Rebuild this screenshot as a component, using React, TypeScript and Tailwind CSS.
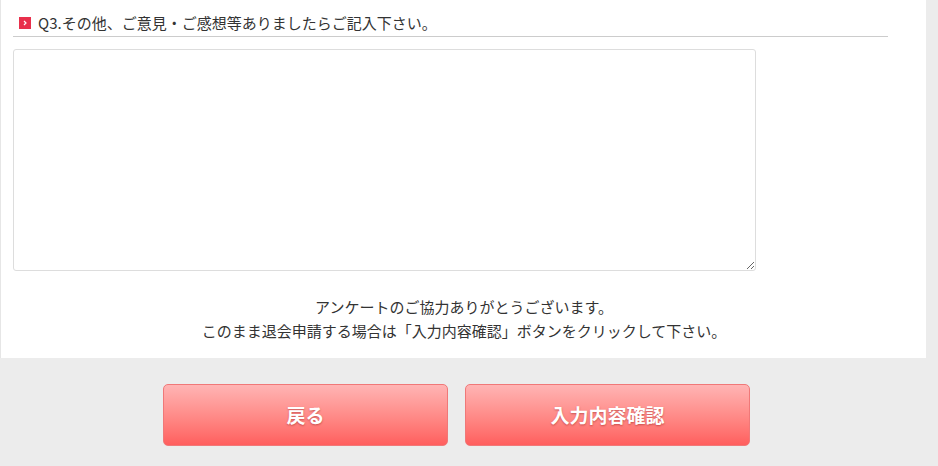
export default function App() {
  const jp = { fontFamily: '"Noto Sans CJK JP", "Liberation Sans", sans-serif' };
  return (
    <div className="w-[938px] h-[466px] bg-[#ececec] overflow-hidden" style={jp}>
      {/* panel */}
      <div className="w-[926px] h-[358px] bg-white border-l border-[#e6e6e6] pt-[13px] pl-[12px]">
        <div className="w-[875px] flex items-center border-b border-[#cccccc] pb-[3px] pl-[6px]">
          <span className="w-[12px] h-[12px] bg-[#e8304c] flex items-center justify-center mr-[7px]">
            <svg width="6" height="6" viewBox="0 0 6 6">
              <path d="M2 1 L4 3 L2 5" stroke="#fff" strokeWidth="1.2" fill="none" />
            </svg>
          </span>
          <span className="text-[15px] leading-[20px] text-[#333]">Q3.その他、ご意見・ご感想等ありましたらご記入下さい。</span>
        </div>
        <textarea
          className="block mt-[12px] w-[743px] h-[222px] border border-[#dddddd] rounded-[3px] resize"
        />
        <div className="w-[902px] text-center text-[15px] leading-[24px] text-[#333] mt-[24px]">
          <p>アンケートのご協力ありがとうございます。</p>
          <p>このまま退会申請する場合は「入力内容確認」ボタンをクリックして下さい。</p>
        </div>
      </div>
      {/* buttons */}
      <div className="flex gap-[17px] pl-[163px] pt-[26px]">
        <Btn label="戻る" />
        <Btn label="入力内容確認" />
      </div>
    </div>
  );
}

function Btn({ label }: { label: string }) {
  return (
    <button className="w-[285px] h-[62px] rounded-[5px] border border-[#f07878] bg-gradient-to-b from-[#ffb4b4] to-[#ff5e5e] text-white text-[19px] font-bold [text-shadow:0_1px_2px_rgba(120,0,0,0.4)]">
      {label}
    </button>
  );
}
